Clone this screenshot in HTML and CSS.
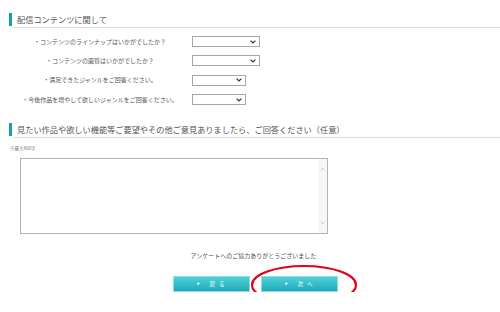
FILE: index.html
```html
<!DOCTYPE html>
<html lang="ja">
<head>
<meta charset="utf-8">
<title>アンケート</title>
<link rel="stylesheet" href="styles.css">
</head>
<body>
<div class="page">
  <div class="heading">
    <span class="bar"></span>
    <h2 class="title">配信コンテンツに関して</h2>
  </div>

  <div class="rows">
    <div class="row">
      <span class="label">・コンテンツのラインナップはいかがでしたか？</span>
      <div class="select wide"><svg class="chev" viewBox="0 0 6 4" width="6" height="4"><path d="M0.6 0.6 L3 3 L5.4 0.6" fill="none" stroke="#333" stroke-width="1.2"/></svg></div>
    </div>
    <div class="row">
      <span class="label">・コンテンツの画質はいかがでしたか？</span>
      <div class="select wide"><svg class="chev" viewBox="0 0 6 4" width="6" height="4"><path d="M0.6 0.6 L3 3 L5.4 0.6" fill="none" stroke="#333" stroke-width="1.2"/></svg></div>
    </div>
    <div class="row">
      <span class="label">・満足できたジャンルをご回答ください。</span>
      <div class="select narrow"><svg class="chev" viewBox="0 0 6 4" width="6" height="4"><path d="M0.6 0.6 L3 3 L5.4 0.6" fill="none" stroke="#333" stroke-width="1.2"/></svg></div>
    </div>
    <div class="row">
      <span class="label">・今後作品を増やして欲しいジャンルをご回答ください。</span>
      <div class="select narrow"><svg class="chev" viewBox="0 0 6 4" width="6" height="4"><path d="M0.6 0.6 L3 3 L5.4 0.6" fill="none" stroke="#333" stroke-width="1.2"/></svg></div>
    </div>
  </div>

  <div class="heading second">
    <span class="bar"></span>
    <h2 class="title">見たい作品や欲しい機能等ご要望やその他ご意見ありましたら、ご回答ください（任意）</h2>
  </div>

  <p class="note">※最大400字</p>

  <div class="textarea">
    <div class="ta-body"></div>
    <div class="scroll">
      <svg viewBox="0 0 6 4" width="5" height="4"><path d="M0.6 3.4 L3 1 L5.4 3.4" fill="none" stroke="#b5b5b5" stroke-width="0.9"/></svg>
      <svg viewBox="0 0 6 4" width="5" height="4"><path d="M0.6 0.6 L3 3 L5.4 0.6" fill="none" stroke="#b5b5b5" stroke-width="0.9"/></svg>
    </div>
  </div>

  <p class="thanks">アンケートへのご協力ありがとうございました</p>

  <div class="buttons">
    <button class="btn" type="button"><span class="tri">▶</span>戻 る</button>
    <button class="btn" type="button"><span class="tri">▶</span>次 へ</button>
    <svg class="circle" viewBox="0 0 110 42" width="110" height="42"><ellipse cx="55" cy="21" rx="52" ry="19" fill="none" stroke="#e2001a" stroke-width="2.2"/></svg>
  </div>
</div>
</body>
</html>
```

FILE: styles.css
```css
* { box-sizing: border-box; }
body {
  margin: 0;
  background: #fff;
  font-family: "Noto Sans CJK JP", "Noto Sans", sans-serif;
  color: #555;
}
.page {
  padding-top: 13px;
  width: 500px;
}
.heading {
  display: flex;
  margin-left: 9px;
  height: 15px;
}
.heading.second { margin-top: 14px; }
.bar {
  width: 3px;
  height: 13px;
  background: #17a0a8;
  flex: none;
}
.title {
  flex: 1;
  margin: 0 0 0 2px;
  padding-left: 3px;
  height: 15px;
  border-bottom: 1px solid #dcdcdc;
  font-size: 8.2px;
  font-weight: normal;
  line-height: 13px;
  color: #555;
  white-space: nowrap;
}
.rows {
  margin-top: 4px;
  padding-left: 9px;
}
.row {
  display: grid;
  grid-template-columns: 182px auto;
  column-gap: 1px;
  align-items: center;
  height: 19.3px;
}
.label {
  text-align: center;
  font-size: 6px;
  line-height: 8px;
  color: #555;
  white-space: nowrap;
}
.select {
  height: 11px;
  border: 1px solid #a6a6a6;
  background: #fff;
  display: flex;
  align-items: center;
  justify-content: flex-end;
  padding-right: 3px;
}
.select.wide { width: 68px; }
.select.narrow { width: 54px; }
.chev { display: block; }
.note {
  margin: 7px 0 0 10px;
  font-size: 4.5px;
  line-height: 6px;
  color: #777;
}
.textarea {
  margin: 7px 0 0 20px;
  width: 308px;
  height: 76px;
  border: 1px solid #b3b3b3;
  display: flex;
}
.ta-body { flex: 1; }
.scroll {
  width: 9px;
  background: #f7f7f7;
  display: flex;
  flex-direction: column;
  justify-content: space-between;
  align-items: center;
  padding: 8px 0 8px;
}
.scroll svg { display: block; }
.thanks {
  margin: 18px 0 0;
  text-align: center;
  padding-left: 7px;
  font-size: 6px;
  line-height: 8px;
  color: #4a4a4a;
}
.buttons {
  position: relative;
  margin-top: 16px;
  display: flex;
  justify-content: center;
  gap: 11px;
  padding-left: 11px;
}
.btn {
  width: 77px;
  height: 16px;
  border: 1px solid #8fdbe0;
  background: linear-gradient(#4fd2da, #1fa9b7);
  color: #fff;
  font-family: inherit;
  font-size: 5.5px;
  line-height: 14px;
  padding: 0;
  display: flex;
  align-items: center;
  justify-content: center;
  letter-spacing: 1.5px;
}
.tri {
  font-size: 3px;
  margin-right: 8px;
}
.circle {
  position: absolute;
  left: 249px;
  top: -12px;
}
```
